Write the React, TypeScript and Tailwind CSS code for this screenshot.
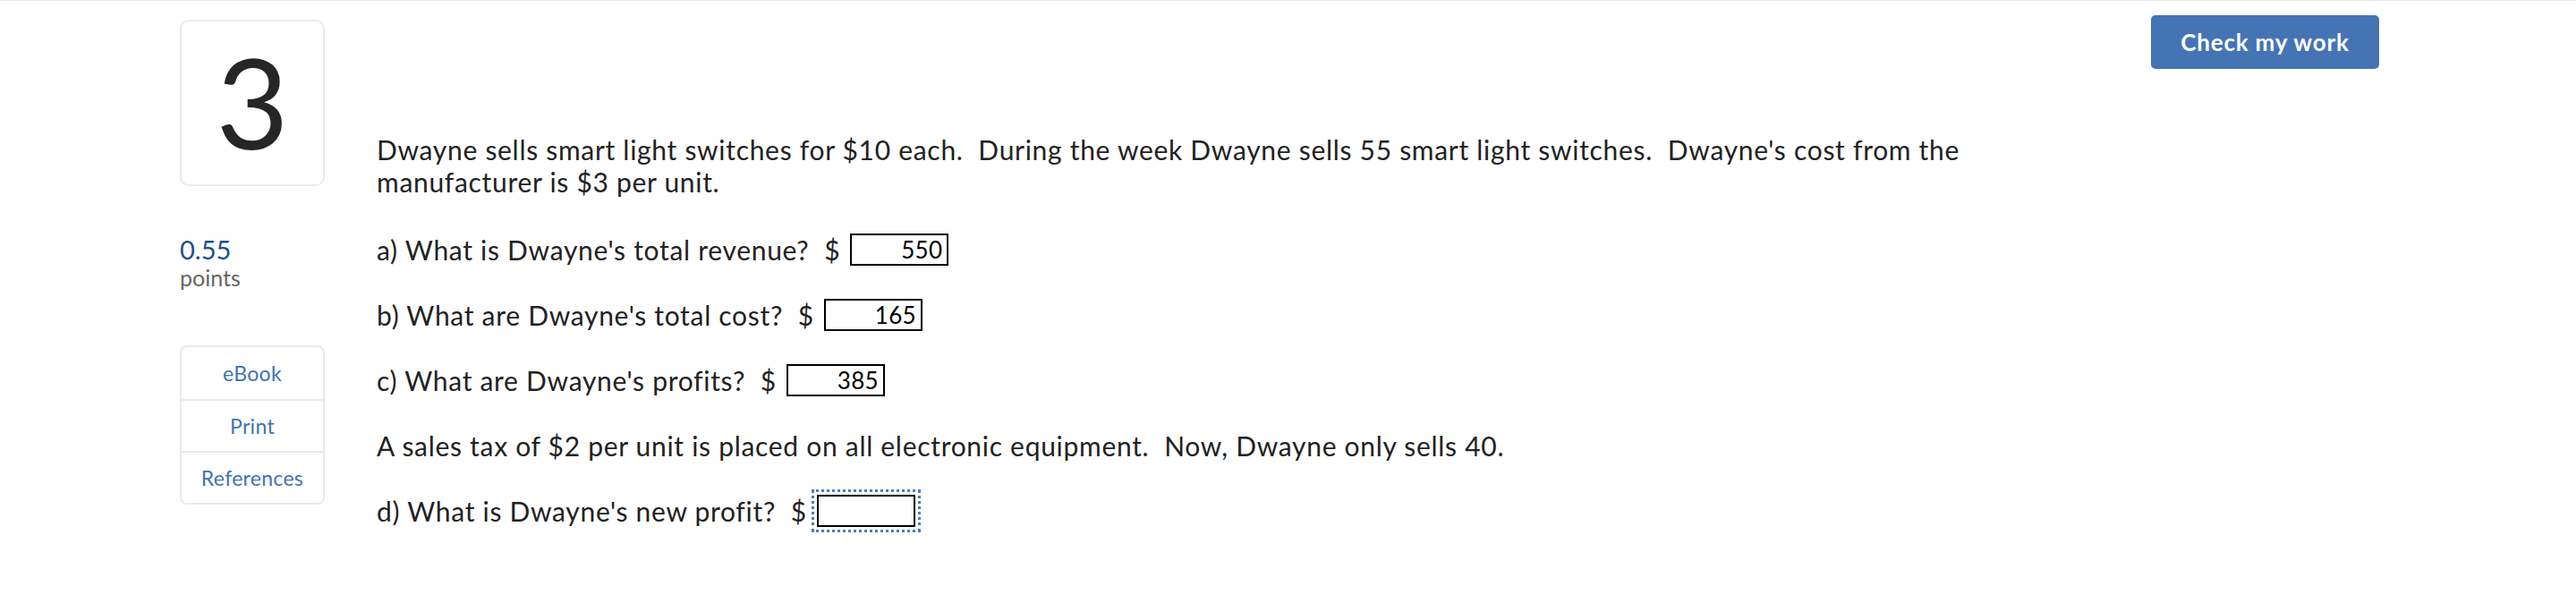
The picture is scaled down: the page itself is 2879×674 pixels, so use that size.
import React from 'react';

const sideLinks = ['eBook', 'Print', 'References'];

const AnswerBox: React.FC<{ value?: string; focused?: boolean }> = ({ value = '', focused }) => (
  <input
    readOnly
    value={value}
    className={
      'w-[110px] h-[36px] border-2 border-black bg-white text-right pr-[5px] text-[26px] text-black tracking-[0.3px] ' +
      (focused ? 'outline-[3px] outline-dotted outline-[#4a7cc0] outline-offset-[3px]' : 'outline-none')
    }
    style={{ fontFamily: 'Lato, "Liberation Sans", sans-serif' }}
  />
);

const QuestionRow: React.FC<{ label: string; value?: string; focused?: boolean }> = ({ label, value, focused }) => (
  <div className="flex items-center h-[36px] whitespace-pre">
    <span>{label}  $</span>
    <span className="ml-[11px] flex">
      <AnswerBox value={value} focused={focused} />
    </span>
  </div>
);

export default function App() {
  return (
    <div
      className="min-h-screen w-full bg-white border-t border-[#e6e6e6] text-[#222222]"
      style={{ fontFamily: 'Lato, "Liberation Sans", sans-serif' }}
    >
      <div className="ml-[201px] w-[2458px] flex">
        {/* Left column: number, points, tools */}
        <div className="w-[162px] shrink-0 pt-[21px] flex flex-col">
          <div className="h-[186px] border-2 border-[#ebebeb] rounded-[10px] flex items-center justify-center">
            <span className="text-[140px] leading-none text-[#262626] -mt-[4px]">3</span>
          </div>
          <div className="mt-[54px] text-[29px] leading-[34px] text-[#1d4f91]">0.55</div>
          <div className="text-[25px] leading-[28px] text-[#666666]">points</div>
          <div className="mt-[62px] border-2 border-[#ebebeb] rounded-[8px] flex flex-col">
            {sideLinks.map((l, i) => (
              <div
                key={l}
                className={
                  'h-[58px] flex items-center justify-center text-[23px] tracking-[0.3px] text-[#3f72b5] ' +
                  (i > 0 ? 'border-t-2 border-[#ebebeb]' : '')
                }
              >
                {l}
              </div>
            ))}
          </div>
        </div>

        {/* Main question area */}
        <div className="flex-1 ml-[58px] flex flex-col">
          <div className="flex justify-end pt-[16px]">
            <button className="w-[255px] h-[60px] rounded-[5px] bg-[#4574b4] text-white text-[26px] tracking-[0.8px] font-bold">
              Check my work
            </button>
          </div>

          <div className="mt-[72px] text-[30px] tracking-[0.7px] leading-[36px] max-w-[1900px]">
            <p className="whitespace-pre-wrap">
              Dwayne sells smart light switches for $10 each.  During the week Dwayne sells 55 smart light switches.  Dwayne's cost from the manufacturer is $3 per unit.
            </p>
            <div className="mt-[40px] flex flex-col gap-[37px]">
              <QuestionRow label="a) What is Dwayne's total revenue?" value="550" />
              <QuestionRow label="b) What are Dwayne's total cost?" value="165" />
              <QuestionRow label="c) What are Dwayne's profits?" value="385" />
              <p className="h-[36px] flex items-center whitespace-pre">
                A sales tax of $2 per unit is placed on all electronic equipment.  Now, Dwayne only sells 40.
              </p>
              <QuestionRow label="d) What is Dwayne's new profit?" focused />
            </div>
          </div>
        </div>
      </div>
    </div>
  );
}
